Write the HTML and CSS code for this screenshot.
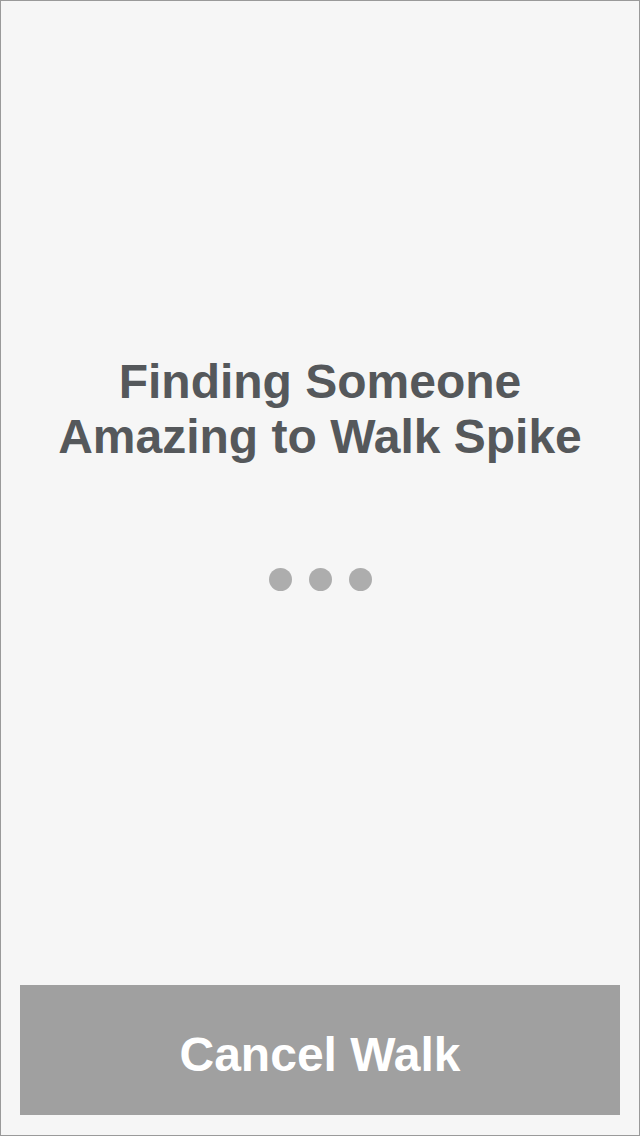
FILE: index.html
```html
<!DOCTYPE html>
<html>
<head>
<meta charset="utf-8">
<link rel="stylesheet" href="styles.css">
</head>
<body>
<div class="screen">
  <main class="content">
    <h1 class="title">Finding Someone<br>Amazing to Walk Spike</h1>
    <div class="dots">
      <span class="dot"></span>
      <span class="dot"></span>
      <span class="dot"></span>
    </div>
  </main>
  <button class="cancel">Cancel Walk</button>
</div>
</body>
</html>
```
FILE: styles.css
```css
html, body {
  margin: 0;
  padding: 0;
  background: #f6f6f6;
}
.screen {
  width: 640px;
  height: 1136px;
  box-sizing: border-box;
  border: 1px solid #9a9a9a;
  background: #f6f6f6;
  display: flex;
  flex-direction: column;
  font-family: "Liberation Sans", Arial, sans-serif;
}
.content {
  flex: 1;
  display: flex;
  flex-direction: column;
  align-items: center;
  padding-top: 353px;
}
.title {
  margin: 0;
  font-size: 48px;
  line-height: 55px;
  font-weight: bold;
  color: #55585b;
  text-align: center;
}
.dots {
  display: flex;
  gap: 17px;
  margin-top: 104px;
}
.dot {
  width: 23px;
  height: 23px;
  border-radius: 50%;
  background: #adadad;
}
.cancel {
  margin: 0 19px 20px;
  height: 130px;
  border: none;
  background: #a0a0a0;
  color: #ffffff;
  font-family: "Liberation Sans", Arial, sans-serif;
  font-weight: bold;
  font-size: 48px;
  padding: 9px 0 0;
}
```
